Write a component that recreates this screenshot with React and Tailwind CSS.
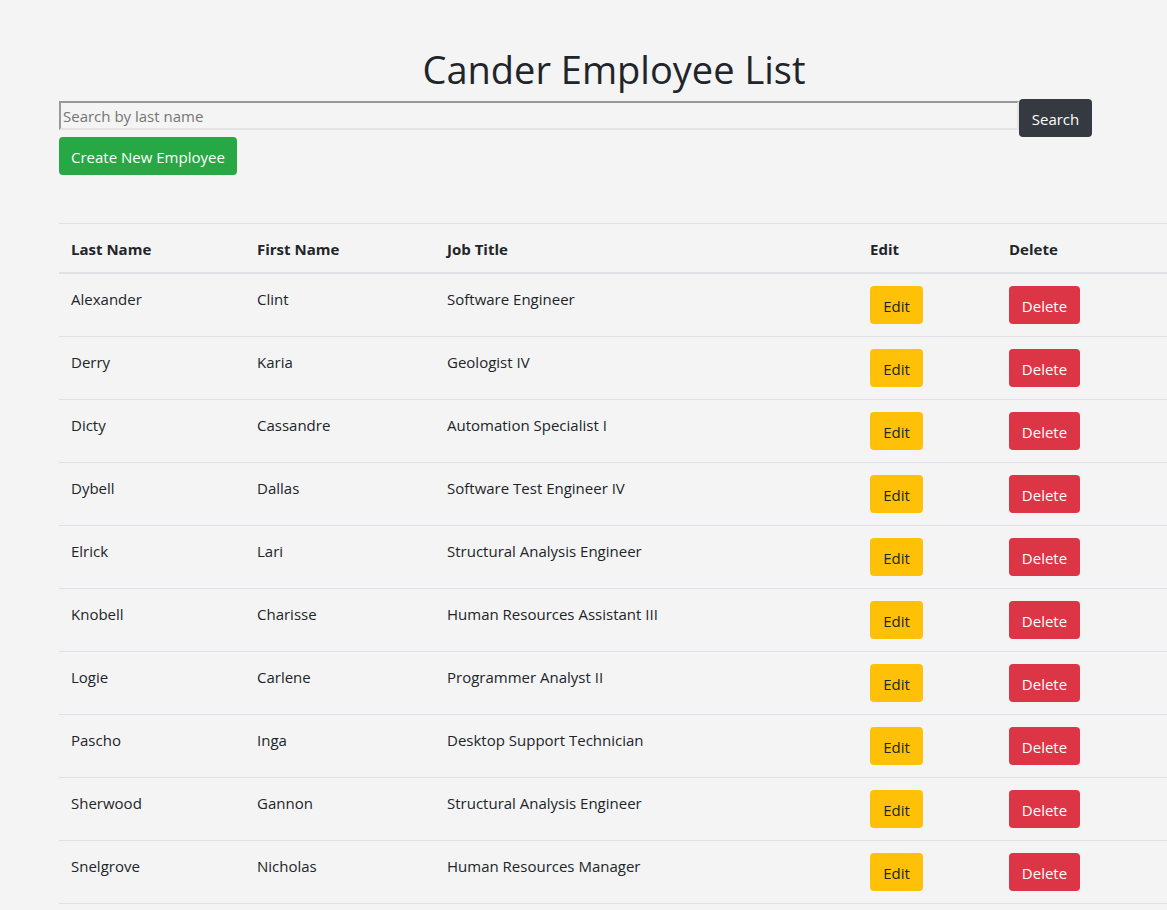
import { useState } from 'react'

const employees = [
  { last: 'Alexander', first: 'Clint', title: 'Software Engineer' },
  { last: 'Derry', first: 'Karia', title: 'Geologist IV' },
  { last: 'Dicty', first: 'Cassandre', title: 'Automation Specialist I' },
  { last: 'Dybell', first: 'Dallas', title: 'Software Test Engineer IV' },
  { last: 'Elrick', first: 'Lari', title: 'Structural Analysis Engineer' },
  { last: 'Knobell', first: 'Charisse', title: 'Human Resources Assistant III' },
  { last: 'Logie', first: 'Carlene', title: 'Programmer Analyst II' },
  { last: 'Pascho', first: 'Inga', title: 'Desktop Support Technician' },
  { last: 'Sherwood', first: 'Gannon', title: 'Structural Analysis Engineer' },
  { last: 'Snelgrove', first: 'Nicholas', title: 'Human Resources Manager' },
]

function App() {
  const [searchTerm, setSearchTerm] = useState('')

  return (
    <div className="min-h-screen bg-[#f4f4f4] text-[#212529] font-['Open_Sans',sans-serif] text-[15px] leading-6 overflow-hidden">
      <div className="ml-[59px] w-[1110px] pt-[43px]">
        {/* Header */}
        <h1 className="text-center text-[38px] leading-[48px] font-normal pt-[2px] mb-[6px]">Cander Employee List</h1>
        <div className="flex items-start">
          <input
            type="text"
            placeholder="Search by last name"
            className="mt-[2px] w-[960px] h-[29px] px-[2px] bg-transparent border-2 border-t-[#999] border-l-[#999] border-b-[#e3e3e3] border-r-[#e3e3e3] placeholder:text-[#757575] outline-none"
            value={searchTerm}
            onChange={(e) => setSearchTerm(e.target.value)}
          />
          <button className="w-[73px] h-[38px] pt-px rounded bg-[#343a40] text-white">Search</button>
        </div>
        <button className="h-[38px] px-3 pt-px rounded bg-[#28a745] text-white">Create New Employee</button>

        {/* Table */}
        <table className="mt-[48px] w-[1110px] border-collapse text-left">
          <thead>
            <tr className="border-t border-[#dee2e6] border-b-2">
              <th className="w-[186px] px-3 pt-[13px] pb-[11px] font-bold">Last Name</th>
              <th className="w-[190px] px-3 pt-[13px] pb-[11px] font-bold">First Name</th>
              <th className="w-[423px] px-3 pt-[13px] pb-[11px] font-bold">Job Title</th>
              <th className="w-[139px] px-3 pt-[13px] pb-[11px] font-bold">Edit</th>
              <th className="px-3 pt-[13px] pb-[11px] font-bold">Delete</th>
            </tr>
          </thead>
          <tbody>
            {employees.map((e) => (
              <tr key={e.last} className="border-b border-[#dee2e6]">
                <td className="px-3 pt-[13px] pb-[25px] align-top">{e.last}</td>
                <td className="px-3 pt-[13px] pb-[25px] align-top">{e.first}</td>
                <td className="px-3 pt-[13px] pb-[25px] align-top">{e.title}</td>
                <td className="p-3">
                  <button className="w-[53px] h-[38px] pt-px rounded bg-[#ffc107] text-[#212529]">Edit</button>
                </td>
                <td className="p-3">
                  <button className="w-[71px] h-[38px] pt-px rounded bg-[#dc3545] text-white">Delete</button>
                </td>
              </tr>
            ))}
          </tbody>
        </table>
      </div>
    </div>
  )
}

export default App
